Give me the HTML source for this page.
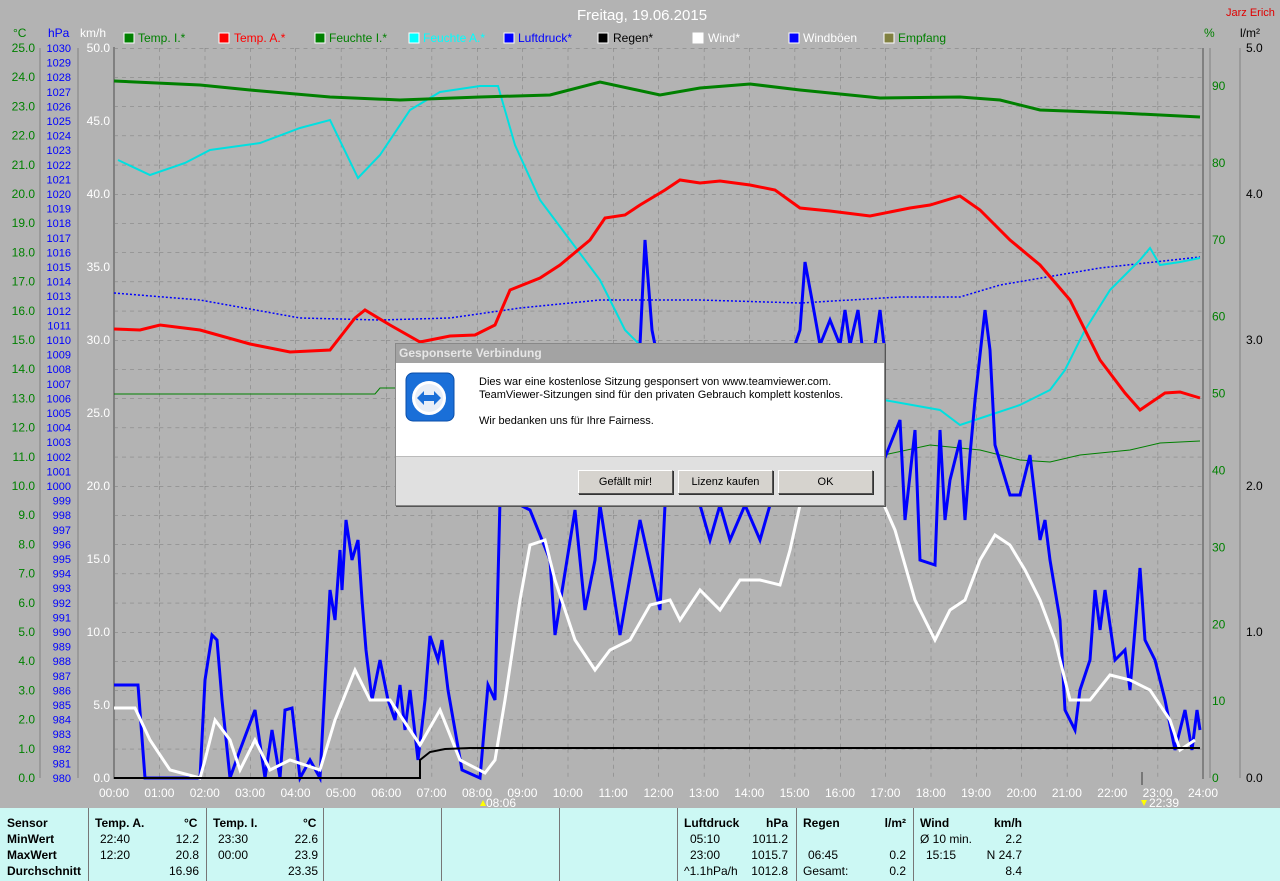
<!DOCTYPE html>
<html><head><meta charset="utf-8"><style>
body{margin:0;width:1280px;height:881px;overflow:hidden;background:#b3b3b3;font-family:"Liberation Sans",sans-serif;}
svg{position:absolute;left:0;top:0}
.tbl{position:absolute;left:0;top:808px;width:1280px;height:73px;background:#ccf8f4;font-size:12px;color:#000}
.col{position:absolute;top:0;height:73px;border-left:1px solid #777}
.r{position:absolute;white-space:nowrap}
.b{font-weight:bold}
.dlg{position:absolute;left:395px;top:343px;width:488px;height:161px;background:#e0e0e0;border:1px solid #888;box-shadow:1px 1px 0 #555}
.dt{height:19px;background:#a3a3a3;color:#e6e6e6;font-weight:bold;font-size:12px;line-height:19px;padding-left:3px}
.dbody{position:absolute;left:0;top:19px;width:488px;height:93px;background:#fff;border-bottom:1px solid #bbb;font-size:11px;color:#000}
.btn{position:absolute;top:126px;height:22px;background:#d6d3ce;border:1px solid #555;border-top-color:#fff;border-left-color:#fff;font-size:11px;text-align:center;line-height:22px;box-shadow:1px 1px 0 #333}
</style></head><body>
<svg width="1280" height="881" font-family="Liberation Sans, sans-serif" font-size="12">
<defs>
<pattern id="g" x="114" y="48" width="45.375" height="29.2" patternUnits="userSpaceOnUse">
<line x1="0" y1="0" x2="45.375" y2="0" stroke="#7a7a7a" stroke-dasharray="4,4"/>
<line x1="0" y1="0" x2="0" y2="29.2" stroke="#7a7a7a" stroke-dasharray="4,4"/>
</pattern>
</defs>
<text x="642" y="20" fill="#fff" font-size="15" text-anchor="middle">Freitag, 19.06.2015</text>
<text x="1226" y="16" fill="#e00000" font-size="11">Jarz Erich</text>
<text x="13" y="37" fill="#008000">°C</text><text x="48" y="37" fill="#0000ff">hPa</text><text x="80" y="37" fill="#fff">km/h</text>
<text x="1204" y="37" fill="#008000">%</text><text x="1240" y="37" fill="#000">l/m²</text>
<!-- legend -->
<g font-size="12">
<rect x="124" y="33" width="10" height="10" fill="#008000" stroke="#fff"/><text x="138" y="42" fill="#008000">Temp. I.*</text>
<rect x="219" y="33" width="10" height="10" fill="#ff0000" stroke="#fff"/><text x="234" y="42" fill="#ff0000">Temp. A.*</text>
<rect x="315" y="33" width="10" height="10" fill="#008000" stroke="#fff"/><text x="329" y="42" fill="#008000">Feuchte I.*</text>
<rect x="409" y="33" width="10" height="10" fill="#00ffff" stroke="#fff"/><text x="423" y="42" fill="#00ffff">Feuchte A.*</text>
<rect x="504" y="33" width="10" height="10" fill="#0000ff" stroke="#fff"/><text x="518" y="42" fill="#0000ff">Luftdruck*</text>
<rect x="598" y="33" width="10" height="10" fill="#000" stroke="#fff"/><text x="613" y="42" fill="#000">Regen*</text>
<rect x="693" y="33" width="10" height="10" fill="#fff" stroke="#fff"/><text x="708" y="42" fill="#fff">Wind*</text>
<rect x="789" y="33" width="10" height="10" fill="#0000ff" stroke="#fff"/><text x="803" y="42" fill="#fff">Windböen</text>
<rect x="884" y="33" width="10" height="10" fill="#808040" stroke="#fff"/><text x="898" y="42" fill="#008000">Empfang</text>
</g>
<!-- grid -->
<rect x="114" y="48" width="1089" height="730" fill="url(#g)"/>
<line x1="114" y1="47" x2="114" y2="779" stroke="#808080" stroke-width="2"/>
<line x1="1203" y1="48" x2="1203" y2="779" stroke="#808080" stroke-width="2"/>
<line x1="40" y1="48" x2="40" y2="778" stroke="#808080"/>
<line x1="78" y1="48" x2="78" y2="778" stroke="#808080"/>
<line x1="1210" y1="48" x2="1210" y2="778" stroke="#808080"/>
<line x1="1240" y1="48" x2="1240" y2="778" stroke="#808080"/>
<!-- left labels -->
<text fill="#008000" text-anchor="end" font-size="12"><tspan x="35" y="52">25.0</tspan><tspan x="35" dy="29.2">24.0</tspan><tspan x="35" dy="29.2">23.0</tspan><tspan x="35" dy="29.2">22.0</tspan><tspan x="35" dy="29.2">21.0</tspan><tspan x="35" dy="29.2">20.0</tspan><tspan x="35" dy="29.2">19.0</tspan><tspan x="35" dy="29.2">18.0</tspan><tspan x="35" dy="29.2">17.0</tspan><tspan x="35" dy="29.2">16.0</tspan><tspan x="35" dy="29.2">15.0</tspan><tspan x="35" dy="29.2">14.0</tspan><tspan x="35" dy="29.2">13.0</tspan><tspan x="35" dy="29.2">12.0</tspan><tspan x="35" dy="29.2">11.0</tspan><tspan x="35" dy="29.2">10.0</tspan><tspan x="35" dy="29.2">9.0</tspan><tspan x="35" dy="29.2">8.0</tspan><tspan x="35" dy="29.2">7.0</tspan><tspan x="35" dy="29.2">6.0</tspan><tspan x="35" dy="29.2">5.0</tspan><tspan x="35" dy="29.2">4.0</tspan><tspan x="35" dy="29.2">3.0</tspan><tspan x="35" dy="29.2">2.0</tspan><tspan x="35" dy="29.2">1.0</tspan><tspan x="35" dy="29.2">0.0</tspan></text>
<text fill="#0000ff" text-anchor="end" font-size="11"><tspan x="71" y="52">1030</tspan><tspan x="71" dy="14.6">1029</tspan><tspan x="71" dy="14.6">1028</tspan><tspan x="71" dy="14.6">1027</tspan><tspan x="71" dy="14.6">1026</tspan><tspan x="71" dy="14.6">1025</tspan><tspan x="71" dy="14.6">1024</tspan><tspan x="71" dy="14.6">1023</tspan><tspan x="71" dy="14.6">1022</tspan><tspan x="71" dy="14.6">1021</tspan><tspan x="71" dy="14.6">1020</tspan><tspan x="71" dy="14.6">1019</tspan><tspan x="71" dy="14.6">1018</tspan><tspan x="71" dy="14.6">1017</tspan><tspan x="71" dy="14.6">1016</tspan><tspan x="71" dy="14.6">1015</tspan><tspan x="71" dy="14.6">1014</tspan><tspan x="71" dy="14.6">1013</tspan><tspan x="71" dy="14.6">1012</tspan><tspan x="71" dy="14.6">1011</tspan><tspan x="71" dy="14.6">1010</tspan><tspan x="71" dy="14.6">1009</tspan><tspan x="71" dy="14.6">1008</tspan><tspan x="71" dy="14.6">1007</tspan><tspan x="71" dy="14.6">1006</tspan><tspan x="71" dy="14.6">1005</tspan><tspan x="71" dy="14.6">1004</tspan><tspan x="71" dy="14.6">1003</tspan><tspan x="71" dy="14.6">1002</tspan><tspan x="71" dy="14.6">1001</tspan><tspan x="71" dy="14.6">1000</tspan><tspan x="71" dy="14.6">999</tspan><tspan x="71" dy="14.6">998</tspan><tspan x="71" dy="14.6">997</tspan><tspan x="71" dy="14.6">996</tspan><tspan x="71" dy="14.6">995</tspan><tspan x="71" dy="14.6">994</tspan><tspan x="71" dy="14.6">993</tspan><tspan x="71" dy="14.6">992</tspan><tspan x="71" dy="14.6">991</tspan><tspan x="71" dy="14.6">990</tspan><tspan x="71" dy="14.6">989</tspan><tspan x="71" dy="14.6">988</tspan><tspan x="71" dy="14.6">987</tspan><tspan x="71" dy="14.6">986</tspan><tspan x="71" dy="14.6">985</tspan><tspan x="71" dy="14.6">984</tspan><tspan x="71" dy="14.6">983</tspan><tspan x="71" dy="14.6">982</tspan><tspan x="71" dy="14.6">981</tspan><tspan x="71" dy="14.6">980</tspan></text>
<text fill="#fff" text-anchor="end" font-size="12"><tspan x="110" y="52">50.0</tspan><tspan x="110" dy="73">45.0</tspan><tspan x="110" dy="73">40.0</tspan><tspan x="110" dy="73">35.0</tspan><tspan x="110" dy="73">30.0</tspan><tspan x="110" dy="73">25.0</tspan><tspan x="110" dy="73">20.0</tspan><tspan x="110" dy="73">15.0</tspan><tspan x="110" dy="73">10.0</tspan><tspan x="110" dy="73">5.0</tspan><tspan x="110" dy="73">0.0</tspan></text>
<text fill="#008000" font-size="12"><tspan x="1212" y="90">90</tspan><tspan x="1212" dy="76.9">80</tspan><tspan x="1212" dy="76.9">70</tspan><tspan x="1212" dy="76.9">60</tspan><tspan x="1212" dy="76.9">50</tspan><tspan x="1212" dy="76.9">40</tspan><tspan x="1212" dy="76.9">30</tspan><tspan x="1212" dy="76.9">20</tspan><tspan x="1212" dy="76.9">10</tspan><tspan x="1212" dy="76.9">0</tspan></text>
<text fill="#000" font-size="12"><tspan x="1246" y="52">5.0</tspan><tspan x="1246" dy="146">4.0</tspan><tspan x="1246" dy="146">3.0</tspan><tspan x="1246" dy="146">2.0</tspan><tspan x="1246" dy="146">1.0</tspan><tspan x="1246" dy="146">0.0</tspan></text>
<!-- time labels -->
<text fill="#fff" font-size="12" text-anchor="middle" y="797"><tspan x="114">00:00</tspan><tspan x="159.4">01:00</tspan><tspan x="204.8">02:00</tspan><tspan x="250.1">03:00</tspan><tspan x="295.5">04:00</tspan><tspan x="340.9">05:00</tspan><tspan x="386.3">06:00</tspan><tspan x="431.6">07:00</tspan><tspan x="477">08:00</tspan><tspan x="522.4">09:00</tspan><tspan x="567.8">10:00</tspan><tspan x="613.1">11:00</tspan><tspan x="658.5">12:00</tspan><tspan x="703.9">13:00</tspan><tspan x="749.3">14:00</tspan><tspan x="794.6">15:00</tspan><tspan x="840">16:00</tspan><tspan x="885.4">17:00</tspan><tspan x="930.8">18:00</tspan><tspan x="976.1">19:00</tspan><tspan x="1021.5">20:00</tspan><tspan x="1066.9">21:00</tspan><tspan x="1112.3">22:00</tspan><tspan x="1157.6">23:00</tspan><tspan x="1203">24:00</tspan></text>
<text x="486" y="807" fill="#fff" font-size="12">08:06</text><path d="M480 806 l3 -6 l3 6z" fill="#ff0"/>
<text x="1149" y="807" fill="#fff" font-size="12">22:39</text><path d="M1141 800 l3 6 l3 -6z" fill="#ff0"/>
<line x1="1142" y1="772" x2="1142" y2="785" stroke="#777" stroke-width="2"/>
<!-- data -->
<polyline fill="none" stroke="#008000" stroke-width="1" points="114,394 375,394 380,388 395,388"/>
<polyline fill="none" stroke="#008000" stroke-width="1" points="884,455 930,445 980,450 1020,460 1050,462 1080,455 1130,450 1160,443 1200,441"/>
<polyline fill="none" stroke="#0000ff" stroke-width="1.5" stroke-dasharray="2,2" points="114,293 200,300 300,318 380,320 450,318 520,308 600,300 700,300 800,303 900,297 960,297 1000,285 1100,268 1200,257"/>
<polyline fill="none" stroke="#00e0e0" stroke-width="2" points="118,160 150,175 185,163 210,150 260,143 300,128 330,120 358,178 380,155 410,110 440,92 480,86 498,86 515,145 540,200 570,240 600,280 625,330 640,345"/>
<polyline fill="none" stroke="#00e0e0" stroke-width="2" points="884,400 940,410 960,425 990,415 1020,405 1050,390 1065,370 1085,330 1110,290 1140,260 1150,248 1160,265 1180,262 1200,258"/>
<polyline fill="none" stroke="#008000" stroke-width="3" points="114,81 200,85 250,90 330,97 400,100 480,97 550,95 600,82 660,95 700,88 750,84 800,90 880,98 960,97 1000,100 1040,110 1120,113 1200,117"/>
<polyline fill="none" stroke="#ff0000" stroke-width="3" points="114,329 140,330 160,325 200,330 250,344 290,352 330,350 355,318 365,310 390,325 420,342 450,336 475,335 495,325 510,290 540,278 560,265 590,240 605,218 625,215 640,205 665,190 680,180 700,183 720,181 750,185 775,190 800,208 830,211 870,216 910,208 930,205 960,196 980,210 1010,240 1040,265 1070,300 1100,360 1125,393 1140,410 1165,393 1180,392 1200,398"/>
<polyline fill="none" stroke="#0000ff" stroke-width="3" points="114,685 138,685 145,778 200,778 205,680 212,635 217,640 222,700 230,778 240,750 255,710 265,778 272,730 280,778 285,710 292,708 300,778 310,760 320,778 330,590 335,620 340,550 342,590 346,520 352,560 358,540 362,600 366,650 372,700 380,660 388,700 395,720 400,685 405,730 410,690 418,760 425,700 430,636 438,660 442,640 448,690 462,770 480,778 488,685 495,700 500,500 510,500 530,510 550,560 555,635 575,510 585,610 595,560 600,505 620,635 640,520 660,610 665,505"/>
<polyline fill="none" stroke="#0000ff" stroke-width="3" points="640,345 645,240 652,330 655,345"/>
<polyline fill="none" stroke="#0000ff" stroke-width="3" points="795,345 800,330 805,262 812,300 820,345 830,320 840,345 845,310 850,345 858,310 862,345 875,345 880,310 884,345"/>
<polyline fill="none" stroke="#0000ff" stroke-width="3" points="700,505 710,540 720,505 730,540 745,505 760,540 770,505"/>
<polyline fill="none" stroke="#0000ff" stroke-width="3" points="884,460 900,420 905,520 915,430 920,560 935,565 940,430 945,520 950,480 960,440 965,520 970,455 975,400 985,310 990,350 995,445 1010,495 1020,495 1030,455 1040,540 1045,520 1050,560 1060,620 1065,710 1075,730 1080,690 1090,660 1095,590 1100,630 1105,590 1115,660 1125,650 1130,690 1140,568 1145,640 1155,660 1165,700 1175,750 1185,710 1192,750 1197,710 1200,730"/>
<polyline fill="none" stroke="#fff" stroke-width="3" points="114,708 135,708 150,740 170,770 200,778 205,760 215,720 230,740 240,770 255,740 270,770 290,760 320,770 335,720 355,670 370,700 390,700 410,730 420,745 440,710 460,760 485,773 495,760 505,700 520,600 530,545 545,540 555,580 575,640 595,670 610,650 630,640 650,605 670,600 680,620 700,590 720,610 740,580 760,580 780,585 790,550 800,505"/>
<polyline fill="none" stroke="#fff" stroke-width="3" points="860,505 884,505 895,530 915,600 935,640 950,610 965,600 980,560 995,535 1010,545 1025,570 1040,600 1055,640 1070,700 1090,700 1110,675 1130,680 1150,690 1170,720 1180,750 1195,740"/>
<polyline fill="none" stroke="#000" stroke-width="2" points="114,778 420,778 420,760 430,752 445,749 470,748 1200,748"/>
</svg>

<div class="dlg">
<div class="dt">Gesponserte Verbindung</div>
<div class="dbody">
<svg width="60" height="60" style="position:absolute;left:8px;top:8px">
<rect x="2" y="2" width="48" height="48" rx="7" fill="#1a6fd8"/>
<rect x="2" y="2" width="48" height="48" rx="7" fill="none" stroke="#0a4ea8"/>
<circle cx="25" cy="27" r="17" fill="#fff"/>
<circle cx="25" cy="27" r="14" fill="#e8eef7"/>
<path d="M13 27 l7 -7 v4 h10 v-4 l7 7 l-7 7 v-4 h-10 v4z" fill="#1a6fd8"/>
</svg>
<div style="position:absolute;left:83px;top:13px;line-height:13px">Dies war eine kostenlose Sitzung gesponsert von www.teamviewer.com.<br>TeamViewer-Sitzungen sind für den privaten Gebrauch komplett kostenlos.<br><br>Wir bedanken uns für Ihre Fairness.</div>
</div>
<div class="btn" style="left:182px;width:93px">Gefällt mir!</div>
<div class="btn" style="left:282px;width:93px">Lizenz kaufen</div>
<div class="btn" style="left:382px;width:93px">OK</div>
</div>

<div class="tbl">
<div class="col" style="left:88px"></div><div class="col" style="left:206px"></div><div class="col" style="left:323px"></div><div class="col" style="left:441px"></div><div class="col" style="left:559px"></div><div class="col" style="left:677px"></div><div class="col" style="left:796px"></div><div class="col" style="left:913px"></div>
<div class="r b" style="left:7px;top:8px">Sensor</div><div class="r b" style="left:7px;top:24px">MinWert</div><div class="r b" style="left:7px;top:40px">MaxWert</div><div class="r b" style="left:7px;top:56px">Durchschnitt</div>
<div class="r b" style="left:95px;top:8px">Temp. A.</div><div class="r b" style="left:184px;top:8px">°C</div>
<div class="r" style="left:100px;top:24px">22:40</div><div class="r" style="right:1081px;top:24px">12.2</div>
<div class="r" style="left:100px;top:40px">12:20</div><div class="r" style="right:1081px;top:40px">20.8</div>
<div class="r" style="right:1081px;top:56px">16.96</div>
<div class="r b" style="left:213px;top:8px">Temp. I.</div><div class="r b" style="left:303px;top:8px">°C</div>
<div class="r" style="left:218px;top:24px">23:30</div><div class="r" style="right:962px;top:24px">22.6</div>
<div class="r" style="left:218px;top:40px">00:00</div><div class="r" style="right:962px;top:40px">23.9</div>
<div class="r" style="right:962px;top:56px">23.35</div>
<div class="r b" style="left:684px;top:8px">Luftdruck</div><div class="r b" style="right:492px;top:8px">hPa</div>
<div class="r" style="left:690px;top:24px">05:10</div><div class="r" style="right:492px;top:24px">1011.2</div>
<div class="r" style="left:690px;top:40px">23:00</div><div class="r" style="right:492px;top:40px">1015.7</div>
<div class="r" style="left:684px;top:56px">^1.1hPa/h</div><div class="r" style="right:492px;top:56px">1012.8</div>
<div class="r b" style="left:803px;top:8px">Regen</div><div class="r b" style="right:374px;top:8px">l/m²</div>
<div class="r" style="left:808px;top:40px">06:45</div><div class="r" style="right:374px;top:40px">0.2</div>
<div class="r" style="left:803px;top:56px">Gesamt:</div><div class="r" style="right:374px;top:56px">0.2</div>
<div class="r b" style="left:920px;top:8px">Wind</div><div class="r b" style="right:258px;top:8px">km/h</div>
<div class="r" style="left:920px;top:24px">Ø 10 min.</div><div class="r" style="right:258px;top:24px">2.2</div>
<div class="r" style="left:926px;top:40px">15:15</div><div class="r" style="right:258px;top:40px">N 24.7</div>
<div class="r" style="right:258px;top:56px">8.4</div>
</div>
</body></html>
